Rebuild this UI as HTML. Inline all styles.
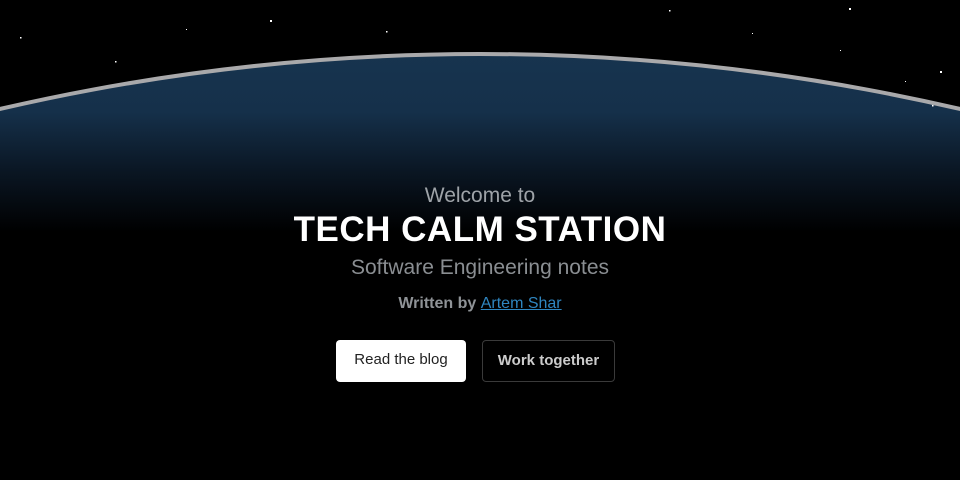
<!DOCTYPE html>
<html><head><style>
html,body{margin:0;padding:0;width:960px;height:480px;overflow:hidden;background:#000;font-family:"Liberation Sans",sans-serif}
.c{position:absolute;left:0;width:960px;text-align:center}
</style></head><body>
<svg width="960" height="480" viewBox="0 0 960 480" style="position:absolute;left:0;top:0;overflow:hidden">
<defs><linearGradient id="g" x1="0" y1="52" x2="0" y2="480" gradientUnits="userSpaceOnUse">
<stop offset="0" stop-color="#17344f"/><stop offset="0.14" stop-color="#15304a"/><stop offset="0.28" stop-color="#0a1623"/><stop offset="0.42" stop-color="#000"/><stop offset="1" stop-color="#000"/></linearGradient></defs>
<circle cx="480" cy="2176" r="2122" fill="url(#g)" stroke="#a9a9ab" stroke-width="4"/>
<g fill="#fff">
<rect x="115" y="61" width="1.5" height="1.5"/><rect x="270" y="20" width="2" height="2"/><rect x="20" y="37" width="1.5" height="1.5"/><rect x="186" y="29" width="1" height="1"/><rect x="386" y="31" width="1.5" height="1.5"/><rect x="669" y="10" width="1.5" height="1.5"/><rect x="849" y="8" width="2" height="2"/><rect x="940" y="71" width="2" height="2"/><rect x="905" y="81" width="1" height="1"/><rect x="752" y="33" width="1" height="1"/><rect x="840" y="50" width="1" height="1"/><rect x="932" y="105" width="1.5" height="1.5"/>
</g>
</svg>
<div class="c" style="top:184px;font-size:21px;color:#9ea3a8">Welcome to</div>
<div class="c" style="top:210px;font-size:35px;font-weight:bold;color:#fff;letter-spacing:0.5px">TECH CALM STATION</div>
<div class="c" style="top:256px;font-size:21px;color:#8a8e92">Software Engineering notes</div>
<div class="c" style="top:295px;font-size:16px;font-weight:bold;color:#8f9397">Written by <span style="color:#2f86c0;text-decoration:underline;font-weight:normal">Artem Shar</span></div>
<div style="position:absolute;left:336px;top:340px;width:130px;height:42px;background:#fff;border-radius:4px;color:#222;font-size:15px;line-height:40px;text-align:center">Read the blog</div>
<div style="position:absolute;left:482px;top:340px;width:131px;height:40px;border:1px solid #3a3a3a;border-radius:4px;color:#ccc;font-size:15px;font-weight:bold;line-height:40px;text-align:center">Work together</div>
</body></html>
